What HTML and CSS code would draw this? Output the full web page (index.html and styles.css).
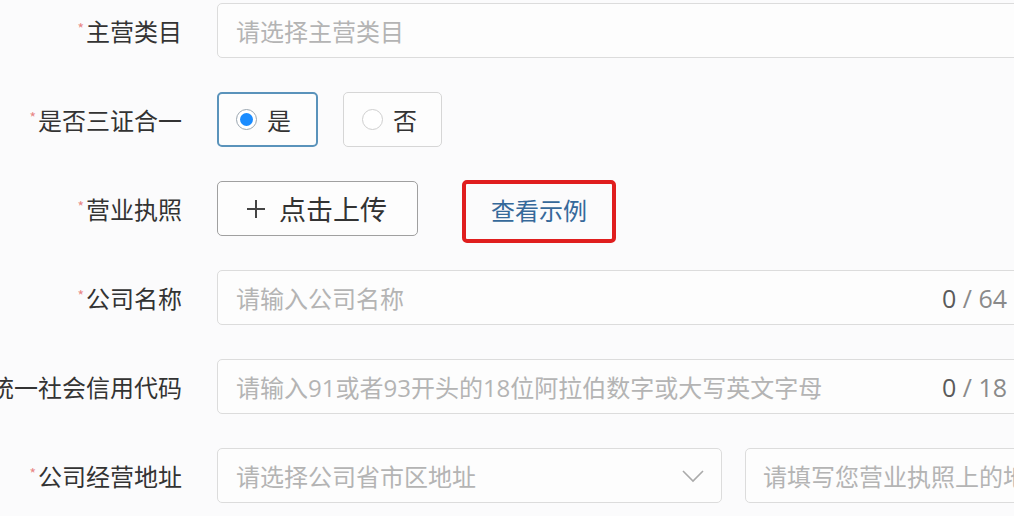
FILE: index.html
```html
<!DOCTYPE html>
<html lang="zh-CN">
<head>
<meta charset="utf-8">
<title>商家入驻</title>
<link rel="stylesheet" href="styles.css">
</head>
<body>
<form class="form">
  <div class="row">
    <div class="label"><span class="req">*</span>主营类目</div>
    <div class="control">
      <div class="input full"><span class="ph">请选择主营类目</span></div>
    </div>
  </div>

  <div class="row">
    <div class="label"><span class="req">*</span>是否三证合一</div>
    <div class="control">
      <div class="radio checked"><span class="dot"></span><span class="rtext">是</span></div>
      <div class="radio no"><span class="dot"></span><span class="rtext">否</span></div>
    </div>
  </div>

  <div class="row">
    <div class="label"><span class="req">*</span>营业执照</div>
    <div class="control">
      <div class="upload">
        <svg class="plus" width="20" height="20" viewBox="0 0 20 20"><path d="M10 1V19M1 10H19" stroke="#444" stroke-width="2" fill="none"/></svg>
        <span>点击上传</span>
      </div>
      <div class="example"><span>查看示例</span></div>
    </div>
  </div>

  <div class="row">
    <div class="label"><span class="req">*</span>公司名称</div>
    <div class="control">
      <div class="input full"><span class="ph">请输入公司名称</span><span class="count"><b>0</b> / 64</span></div>
    </div>
  </div>

  <div class="row">
    <div class="label"><span class="req">*</span>统一社会信用代码</div>
    <div class="control">
      <div class="input full"><span class="ph">请输入91或者93开头的18位阿拉伯数字或大写英文字母</span><span class="count"><b>0</b> / 18</span></div>
    </div>
  </div>

  <div class="row">
    <div class="label"><span class="req">*</span>公司经营地址</div>
    <div class="control">
      <div class="input select"><span class="ph">请选择公司省市区地址</span>
        <svg class="arrow" width="24" height="14" viewBox="0 0 24 14"><path d="M2 2L12 12L22 2" stroke="#aaa" stroke-width="1.6" fill="none"/></svg>
      </div>
      <div class="input addr"><span class="ph">请填写您营业执照上的地址</span></div>
    </div>
  </div>
</form>
</body>
</html>
```

FILE: styles.css
```css
html, body {
  margin: 0;
  overflow: hidden;
  background: #fbfbfc;
}

body {
  font-family: "Noto Sans CJK SC", "Noto Sans", sans-serif;
  color: #333;
}

.form {
  padding-top: 3px;
  display: flex;
  flex-direction: column;
  gap: 34px;
}

.row {
  display: grid;
  grid-template-columns: 182px 1fr;
  grid-template-rows: 55px;
  column-gap: 35px;
  height: 55px;
}

.label {
  display: flex;
  justify-content: flex-end;
  align-items: center;
  white-space: nowrap;
  font-size: 24px;
  color: #333;
}

.req {
  align-self: flex-start;
  margin-top: 18px;
  margin-right: 2px;
  font-size: 14px;
  line-height: 1;
  color: #e88585;
}

.control {
  display: flex;
  align-items: center;
  min-width: 0;
}

.input {
  box-sizing: border-box;
  height: 55px;
  border: 1px solid #dcdcdc;
  border-radius: 5px;
  background: #fdfdfd;
  display: flex;
  align-items: center;
  padding: 0 15px 0 18px;
  font-family: "Open Sans", "Noto Sans CJK SC", sans-serif;
  font-size: 24px;
  white-space: nowrap;
  flex-shrink: 0;
}

.ph {
  color: #b4b4b4;
  flex: 1;
  overflow: hidden;
}

.full {
  width: 806px;
}

.count {
  color: #8a8a8a;
  font-size: 25px;
}

.count b {
  font-weight: normal;
  color: #5a5a5a;
}

.select {
  width: 505px;
  padding-right: 16px;
}

.arrow {
  margin-left: 10px;
}

.addr {
  width: 300px;
  margin-left: 23px;
  padding-left: 17px;
}

.radio {
  box-sizing: border-box;
  height: 55px;
  border: 1px solid #d6d6d6;
  border-radius: 5px;
  display: flex;
  align-items: center;
  padding-left: 18px;
  font-size: 24px;
  color: #333;
  background: #fdfdfd;
}

.radio.checked {
  width: 101px;
  border: 2px solid #5a93bb;
  padding-left: 17px;
}

.radio.no {
  width: 99px;
  margin-left: 25px;
}

.dot {
  box-sizing: border-box;
  width: 21px;
  height: 21px;
  border-radius: 50%;
  border: 1px solid #cfcfcf;
  background: #fff;
  margin-right: 10px;
  display: flex;
  align-items: center;
  justify-content: center;
}

.checked .dot::after {
  content: "";
  width: 13px;
  height: 13px;
  border-radius: 50%;
  background: #1a8cff;
}

.checked .dot {
  border-color: #9aa6b0;
}

.upload {
  box-sizing: border-box;
  width: 201px;
  height: 55px;
  border: 1px solid #a0a0a0;
  border-radius: 5px;
  display: flex;
  align-items: center;
  padding-left: 28px;
  font-size: 27px;
  color: #333;
  background: #fdfdfd;
}

.plus {
  margin-right: 13px;
}

.example {
  box-sizing: border-box;
  align-self: flex-start;
  margin-top: -1px;
  margin-left: 44px;
  width: 154px;
  height: 63px;
  border: 4px solid #e01e1e;
  border-radius: 5px;
  display: flex;
  align-items: center;
  justify-content: center;
  padding-bottom: 5px;
  font-size: 24px;
  color: #36699a;
}
```
